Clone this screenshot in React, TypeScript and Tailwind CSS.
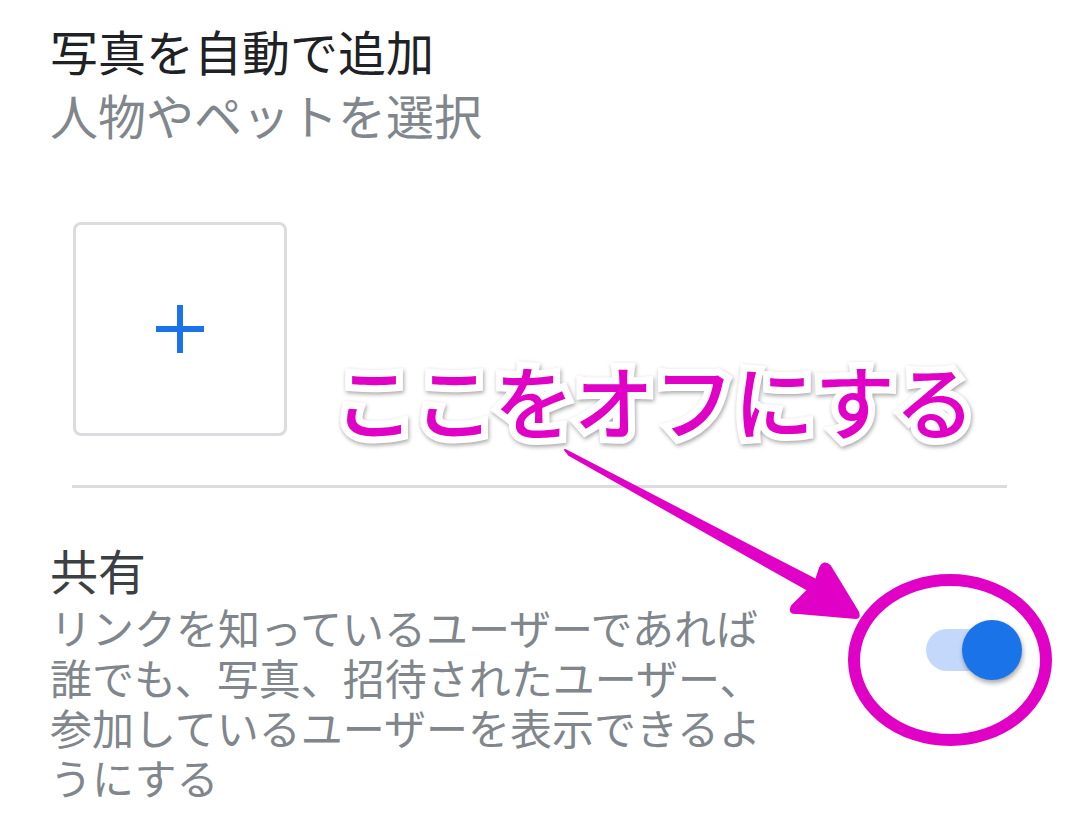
import React from "react";

const FONT = { fontFamily: '"Noto Sans CJK JP", "Noto Sans", sans-serif' };

function Toggle() {
  return (
    <div className="relative h-[60px] w-[96px] shrink-0">
      <div className="absolute left-0 top-[9px] h-[42px] w-[74px] rounded-full bg-[#c3d8fb]" />
      <div className="absolute right-0 top-0 h-[60px] w-[60px] rounded-full bg-[#1a73e8] shadow-[1px_3px_5px_rgba(0,0,0,0.35)]" />
    </div>
  );
}

function Annotation() {
  return (
    <>
      <div
        className="absolute left-[334px] top-[350px] text-[80px] font-medium leading-[96px] text-[#e000c6]"
        style={{
          ...FONT,
          WebkitTextStroke: "14px white",
          paintOrder: "stroke fill",
          filter: "drop-shadow(1px 2px 2px rgba(0,0,0,0.35))",
        }}
      >
        ここをオフにする
      </div>
      <svg className="pointer-events-none absolute left-0 top-0" width="1070" height="834" viewBox="0 0 1070 834">
        <path
          d="M565 450 L569 455 L808 590 L792 606 Q788 614 798 613 L856 618 Q860 618 858 612 L830 566 Q824 560 820 568 L816 580 Z"
          fill="#e000c6"
          stroke="#e000c6"
          strokeWidth="2"
          strokeLinejoin="round"
        />
        <ellipse cx="950" cy="660" rx="96" ry="80" fill="none" stroke="#e000c6" strokeWidth="12" />
      </svg>
    </>
  );
}

export default function App() {
  return (
    <div className="relative h-[834px] w-[1070px] overflow-hidden bg-white" style={FONT}>
      <div className="flex flex-col pl-[50px] pt-[18px]">
        <h1 className="text-[48px] leading-[64px] text-[#202124]">写真を自動で追加</h1>
        <p className="text-[48px] leading-[64px] text-[#80868b]">人物やペットを選択</p>

        <div className="ml-[23px] mt-[76px] flex h-[214px] w-[214px] items-center justify-center rounded-[8px] border-[3px] border-[#dadce0]">
          <svg width="50" height="50" viewBox="0 0 50 50">
            <path d="M25 1 V49 M1 25 H49" stroke="#1a73e8" strokeWidth="6" />
          </svg>
        </div>

        <div className="ml-[22px] mr-[63px] mt-[49px] h-[3px] bg-[#dadce0]" />

        <div className="mt-[48px] flex items-start justify-between pr-[48px]">
          <div className="flex w-[730px] flex-col">
            <h2 className="text-[48px] leading-[66px] text-[#3c4043]">共有</h2>
            <p className="text-[42px] leading-[50px] text-[#80868b]">
              リンクを知っているユーザーであれば誰でも、写真、招待されたユーザー、参加しているユーザーを表示できるようにする
            </p>
          </div>
          <div className="mt-[84px]">
            <Toggle />
          </div>
        </div>
      </div>
      <Annotation />
    </div>
  );
}
